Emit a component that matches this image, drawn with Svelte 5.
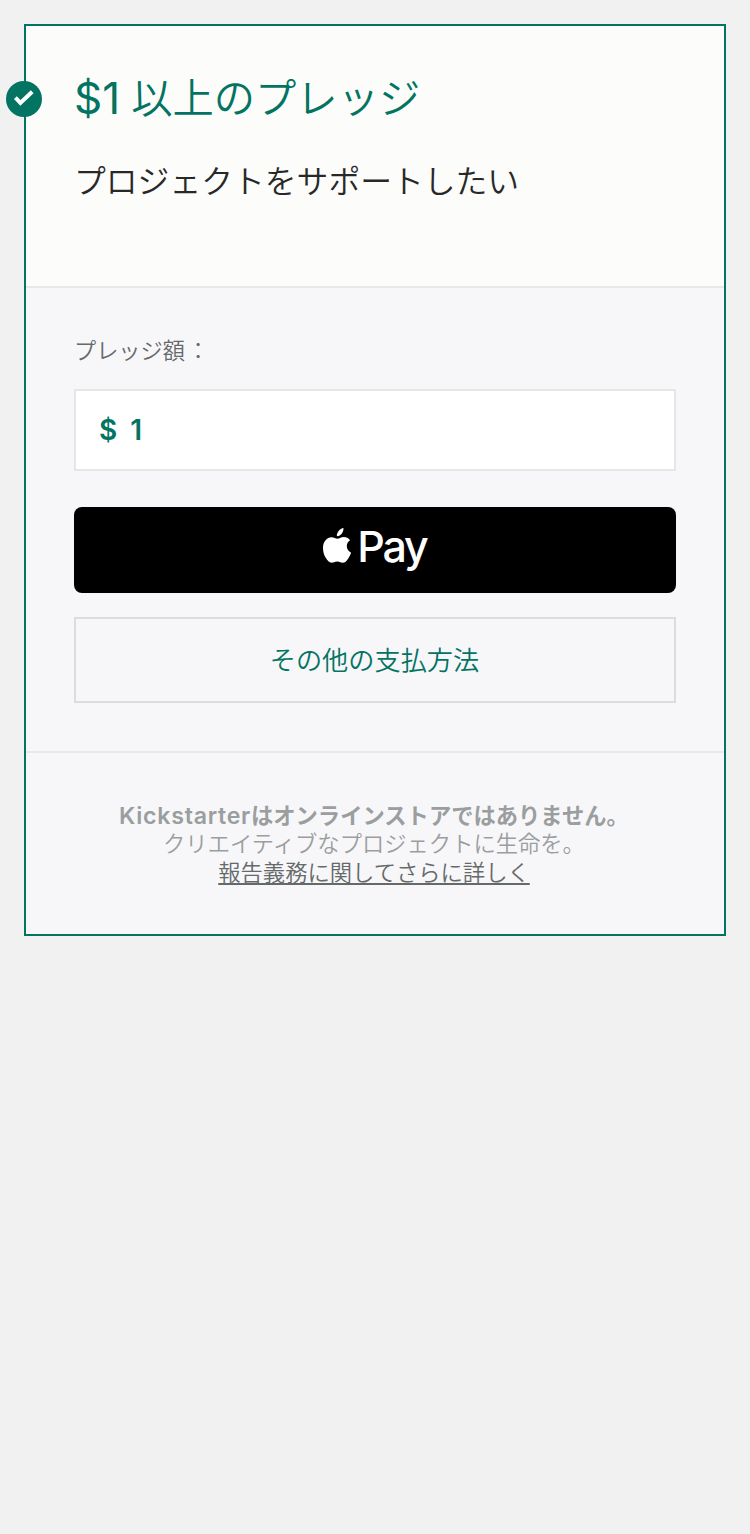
<script>
  let amount = $state('1');
</script>

<main>
  <section class="card">
    <span class="badge">
      <svg viewBox="0 0 36 36" width="36" height="36" aria-hidden="true">
        <path d="M9.4 16.7 L14.4 21.9 L26.2 10.7" fill="none" stroke="#fff" stroke-width="4" />
      </svg>
    </span>
    <header>
      <h1><span class="sum">$1</span><span class="title">以上のプレッジ</span></h1>
      <p>プロジェクトをサポートしたい</p>
    </header>

    <div class="form">
      <span class="label">プレッジ額<span class="colon">：</span></span>
      <div class="field">
        <span class="currency">$</span>
        <span>{amount}</span>
      </div>
      <button class="apple" type="button">
        <svg viewBox="0 0 28 36" width="28" height="36" aria-hidden="true">
          <path fill="#fff" d="M20.4 0C20.7 2.1 19.9 4.1 18.6 5.7C17.4 7.3 15.6 8.3 13.9 8.1C13.6 6.2 14.5 4.3 15.6 2.9C16.9 1.4 18.8 0.3 20.4 0Z" />
          <path fill="#fff" d="M27.1 12.2C25.3 13.4 23.8 15.3 23.8 18.1C23.8 21.4 25.8 23.7 28.1 24.7C27.5 26.6 26.6 28.5 25.4 30.3C23.8 32.7 22.2 34.8 19.8 34.8C17.5 34.8 16.9 33.5 14.2 33.5C11.5 33.5 10.7 34.8 8.6 34.8C6.2 34.8 4.4 32.5 2.9 30.1C1.1 27.4 0 23.5 0 19.9C0 13.4 4.1 9.2 8.5 9.2C10.9 9.2 12.7 10.8 14.3 10.8C15.8 10.8 17.9 9 20.9 9C23.1 9 25.5 10 27.1 12.2Z" />
        </svg>
        <span>Pay</span>
      </button>
      <button class="other" type="button">その他の支払方法</button>
    </div>

    <footer>
      <strong><span class="brand">Kickstarter</span>はオンラインストアではありません。</strong>
      <span class="tagline">クリエイティブなプロジェクトに生命を。</span>
      <span class="link">報告義務に関してさらに詳しく</span>
    </footer>
  </section>
</main>

<style>
  :global(body) {
    background: #f1f1f1;
  }
  main {
    box-sizing: border-box;
    min-height: 1534px;
    padding: 24px;
    font-family: Inter, 'Noto Sans CJK JP', sans-serif;
    font-weight: 350;
    background: #f1f1f1;
  }
  .card {
    position: relative;
    box-sizing: border-box;
    height: 912px;
    border: 2px solid #037362;
    background: #f7f7fa;
  }
  .badge {
    position: absolute;
    left: -20px;
    top: 55px;
    width: 36px;
    height: 36px;
    border-radius: 50%;
    background: #037362;
  }
  .badge svg {
    display: block;
  }
  header {
    box-sizing: border-box;
    height: 262px;
    padding: 42px 48px 0;
    border-bottom: 2px solid #e8e8ea;
    background: #fcfcfa;
  }
  h1 {
    display: flex;
    align-items: center;
    gap: 11px;
    margin: 0;
    height: 60px;
    font-size: 41.3px;
    line-height: 60px;
    font-weight: 350;
    color: #037362;
  }
  .sum {
    font-size: 44px;
    font-weight: 400;
  }
  header p {
    margin: 30px 0 0;
    font-size: 31.8px;
    line-height: 48px;
    color: #282828;
  }
  .form {
    box-sizing: border-box;
    height: 465px;
    padding: 47px 48px 0;
    border-bottom: 2px solid #e8e8ea;
    display: flex;
    flex-direction: column;
  }
  .label {
    height: 32px;
    line-height: 32px;
    font-size: 22.2px;
    color: #656969;
  }
  .colon {
    display: inline-block;
    margin-left: 2px;
  }
  .field {
    box-sizing: border-box;
    height: 82px;
    margin-top: 22px;
    padding: 0 23px;
    border: 2px solid #e6e6e6;
    background: #fff;
    display: flex;
    align-items: center;
    gap: 13px;
    color: #037362;
    font-size: 28px;
    font-weight: 600;
  }
  button {
    box-sizing: border-box;
    height: 86px;
    padding: 0;
    display: flex;
    align-items: center;
    justify-content: center;
    font-family: inherit;
  }
  .apple {
    margin-top: 36px;
    gap: 6px;
    border: 0;
    border-radius: 8px;
    background: #000;
    color: #fff;
    font-size: 43px;
    font-weight: 500;
    letter-spacing: -2.2px;
  }
  .apple svg {
    overflow: visible;
    margin-bottom: 8px;
  }
  .apple span {
    margin-bottom: 8px;
  }
  .other {
    margin-top: 24px;
    padding: 0 1px 3px 0;
    border: 2px solid #dcdcde;
    background: transparent;
    color: #037362;
    font-size: 26.2px;
    font-weight: 350;
  }
  footer {
    display: flex;
    flex-direction: column;
    align-items: center;
    padding: 48px 2px 0 0;
    font-size: 22.3px;
    line-height: 29px;
    color: #9b9e9e;
  }
  strong {
    height: 28px;
    font-weight: 600;
  }
  .brand {
    font-size: 23.2px;
    letter-spacing: 0.7px;
  }
  .link {
    color: #656969;
    text-decoration: underline;
    text-decoration-thickness: 2px;
    text-underline-offset: 2px;
  }
</style>
